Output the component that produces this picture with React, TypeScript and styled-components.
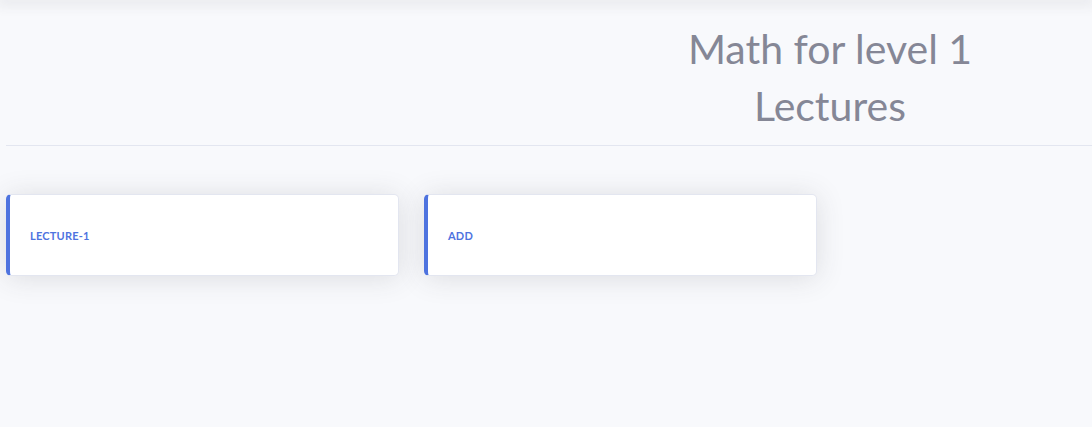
import React from 'react';
import styled, { createGlobalStyle } from 'styled-components';

const GlobalStyle = createGlobalStyle`
  html, body {
    margin: 0;
    padding: 0;
    background: #f8f9fc;
    font-family: Lato, "Open Sans", sans-serif;
  }
  * {
    box-sizing: border-box;
  }
`;

const Page = styled.div`
  width: 100vw;
  height: 100vh;
  position: relative;
  overflow: hidden;
  background: #f8f9fc;
`;

const TopShadow = styled.div`
  height: 0;
  box-shadow: 0 0 14px 4px rgba(58, 59, 69, 0.12);
`;

const Content = styled.div`
  padding-left: 6px;
`;

const HeaderRow = styled.div`
  display: grid;
  grid-template-columns: 562px 1fr;
  padding-top: 20px;
  height: 145px;
`;

const TitleBlock = styled.div`
  text-align: center;
`;

const Title = styled.h1`
  margin: 0;
  font-size: 41px;
  font-weight: 400;
  line-height: 57px;
  color: #858796;
`;

const Divider = styled.hr`
  margin: 0;
  border: 0;
  border-top: 1px solid #e3e6f0;
`;

const CardRow = styled.div`
  display: flex;
  gap: 25px;
  padding-top: 48px;
`;

const Card = styled.div`
  width: 393px;
  height: 82px;
  background: #fff;
  border: 1px solid #e3e6f0;
  border-left: 4px solid #4e73df;
  border-radius: 5px;
  box-shadow: 0 2px 28px 0 rgba(58, 59, 69, 0.15);
  display: flex;
  align-items: center;
  padding: 0 20px;
`;

const CardLabel = styled.div`
  font-size: 11px;
  font-weight: 700;
  text-transform: uppercase;
  color: #4e73df;
  letter-spacing: 0.2px;
`;

const lectures = ['Lecture-1', 'Add'];

export default function App() {
  return (
    <Page>
      <GlobalStyle />
      <TopShadow />
      <Content>
        <HeaderRow>
          <div />
          <TitleBlock>
            <Title>Math for level 1</Title>
            <Title>Lectures</Title>
          </TitleBlock>
        </HeaderRow>
        <Divider />
        <CardRow>
          {lectures.map((l) => (
            <Card key={l}>
              <CardLabel>{l}</CardLabel>
            </Card>
          ))}
        </CardRow>
      </Content>
    </Page>
  );
}
